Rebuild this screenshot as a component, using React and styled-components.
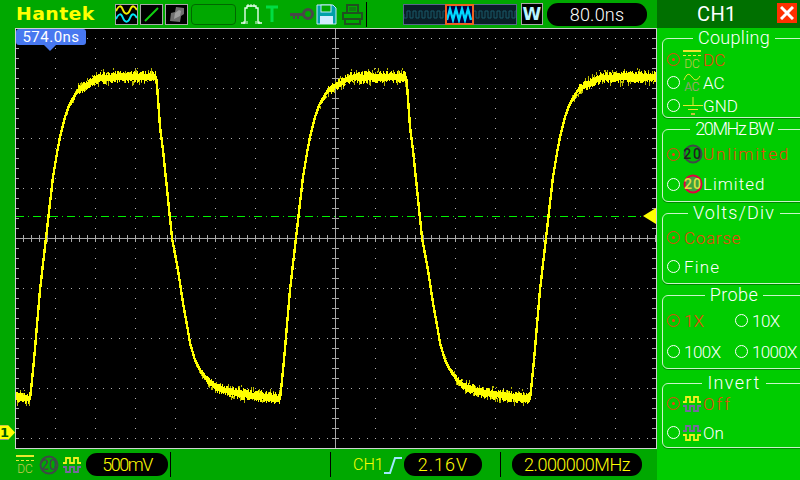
import React from "react";
import styled, { createGlobalStyle } from "styled-components";

const Global = createGlobalStyle`
  html, body { margin: 0; padding: 0; background: #00a800; }
  body { width: 800px; height: 480px; overflow: hidden; font-family: "Roboto", "Liberation Sans", sans-serif; }
  * { box-sizing: border-box; }
`;

const Root = styled.div`
  width: 800px; height: 480px; display: flex; background: #00a800; overflow: hidden;
`;
const LeftColumn = styled.div`
  width: 657px; height: 480px; display: flex; flex-direction: column; position: relative;
`;
const TopBar = styled.div`
  height: 28px; display: flex; align-items: center; padding-left: 16px; flex: none;
`;
const Logo = styled.div`
  width: 99px; font: 700 18.5px/28px "DejaVu Sans", sans-serif; color: #ffff00; letter-spacing: 0.4px; flex: none;
  transform: scaleX(1.02); transform-origin: left;
`;
const IconBox = styled.div`
  width: 23px; height: 21px; background: #000; border: 1px solid #a8a8a8; margin-right: 2px; flex: none; display: flex;
  svg { display: block; }
`;
const EmptySlot = styled.div`
  width: 45px; height: 21px; border: 1px solid #006800; border-radius: 4px; margin-left: 1px; flex: none;
`;
const ToolIcon = styled.svg`
  display: block; flex: none; margin-left: ${p => p.$ml || 0}px;
`;
const Sep = styled.div`
  width: 1px; height: ${p => p.$h || 25}px; background: #000; flex: none; margin-left: ${p => p.$ml || 0}px;
`;
const Strip = styled.div`
  width: 114px; height: 21px; margin-left: 36px; background: #0a1e28; border: 1px solid #58688c; flex: none; position: relative;
`;
const WBox = styled.div`
  width: 22px; height: 22px; margin-left: 4px; background: #000; border: 1px solid #a8a8a8; flex: none;
  color: #b8f4ff; font: 700 17px/20px "DejaVu Sans", sans-serif; text-align: center;
`;
const Pill = styled.div`
  height: ${p => p.$h || 23}px; width: ${p => p.$w}px; margin-left: ${p => p.$ml || 0}px; border-radius: 11px; background: #000;
  color: ${p => p.$color}; font: 300 18px/${p => p.$h || 23}px "Roboto", sans-serif; letter-spacing: ${p => p.$ls ?? 0}px;
  text-align: center; flex: none;
`;
const ScopeWrap = styled.div`
  flex: none; height: 421px; margin-left: 15px; position: relative; border: 1px solid #d0d0d0; background: #000;
  svg { display: block; }
`;
const TimeTag = styled.div`
  position: absolute; left: 0; top: 0; width: 70px; height: 16px; background: #4878f0; border-radius: 3px; color: #fff;
  font: 400 15px/16px "Roboto", sans-serif; letter-spacing: 0.5px; text-align: center;
  &::after {
    content: ""; position: absolute; left: 28px; top: 16px; border: 6px solid transparent; border-top-color: #4878f0; border-bottom: 0;
  }
`;
const TriggerArrow = styled.div`
  position: absolute; right: 0; top: 179px; border: 8px solid transparent; border-right: 13px solid #ffff00; border-left: 0;
`;
const ChannelMark = styled.div`
  position: absolute; left: 0; top: 425px; width: 15px; height: 15px; z-index: 2;
  svg { display: block; }
`;
const ChannelDigit = styled.span`
  position: absolute; left: 0; top: 0; width: 9px; height: 15px; color: #006000; font: 700 13px/15px "DejaVu Sans", sans-serif; text-align: center;
`;
const BottomBar = styled.div`
  flex: 1; display: flex; align-items: center; padding-left: 16px;
`;
const BottomLabel = styled.div`
  margin-left: 22px; width: 26px; color: #ffff00; font: 300 16px/20px "Roboto", sans-serif; flex: none;
`;
const Panel = styled.div`
  width: 143px; height: 480px; background: #00cc00; color: #fff; overflow: hidden; flex: none;
`;
const PanelHead = styled.div`
  height: 28px; background: #007000; display: flex; align-items: center; padding-left: 40px;
`;
const HeadTitle = styled.div`
  font: 400 20px/28px "Roboto", sans-serif; letter-spacing: 0.4px; width: 80px;
`;
const CloseBtn = styled.div`
  width: 20px; height: 20px; background: #ff3000; margin-top: -2px; display: flex; align-items: center; justify-content: center;
`;
const Group = styled.fieldset`
  margin: ${p => p.$mt}px 0 0 5px; padding: 0 0 0 4px; width: 140px; height: ${p => p.$h}px; min-width: 0;
  border: 1px solid #c8f4c8; border-radius: 6px 0 0 6px; box-shadow: 0 1px 0 #008800; display: block;
`;
const Legend = styled.legend`
  margin: 0 auto; padding: 0 5px; height: 20px; font: 300 ${p => p.$fs || 18}px/20px "Roboto", sans-serif; letter-spacing: ${p => p.$ls}px; color: #fff;
`;
const Rows = styled.div`
  display: grid; grid-template-columns: ${p => p.$cols || "1fr"}; margin-top: ${p => p.$mt || 0}px;
`;
const Row = styled.div`
  height: ${p => p.$h}px; display: flex; align-items: center; white-space: nowrap;
  color: ${p => (p.$on ? "#f04010" : "#fff")}; font: 300 17px/20px "Roboto", sans-serif; letter-spacing: ${p => p.$ls ?? 0}px;
`;
const Radio = styled.span`
  width: 13px; height: 13px; border-radius: 50%; border: 1px solid currentColor; flex: none; margin-right: ${p => p.$mr ?? 4}px;
  display: flex; align-items: center; justify-content: center;
  &::after { content: ""; width: 3px; height: 3px; border-radius: 50%; background: ${p => (p.$on ? "currentColor" : "transparent")}; }
`;
const RowIcon = styled.svg`
  flex: none; display: block; margin-right: ${p => p.$mr ?? 2}px;
`;

// ---- icons ----
const DcIcon = ({ size = 18 }) => (
  <RowIcon width={size} height={20} viewBox="0 0 18 20">
    <rect x="0" y="0" width="18" height="2" fill="#e8e830" />
    <path d="M0 5.5h3M5 5.5h3M10 5.5h3M15 5.5h3" stroke="#e8e830" />
    <text x="9" y="18" textAnchor="middle" fontFamily="Roboto" fontSize="12" fontWeight="300" fill="#c8c850">DC</text>
  </RowIcon>
);
const AcIcon = () => (
  <RowIcon width={18} height={20} viewBox="0 0 18 20">
    <path d="M1 7 C4 0 6 0 9 4 S14 8 17 3" fill="none" stroke="#e8e830" />
    <text x="9" y="18" textAnchor="middle" fontFamily="Roboto" fontSize="12" fontWeight="300" fill="#c8c850" stroke="#7070a0" strokeWidth="0.2">AC</text>
  </RowIcon>
);
const GndIcon = () => (
  <RowIcon $mr={0} width={20} height={20} viewBox="0 0 20 20">
    <path d="M10 1v8M0 9.5h20M5 13.5h10" stroke="#e8e830" fill="none" />
    <rect x="8" y="17" width="4" height="2" fill="#c0c040" />
  </RowIcon>
);
const TwentyIcon = ({ red }) => (
  <RowIcon $mr={0} width={20} height={20} viewBox="0 0 20 20">
    <circle cx="10" cy="10" r="8.5" fill={red ? "#40a040" : "#00b800"} stroke={red ? "#e00040" : "#404848"} strokeWidth="2" />
    <text x="10" y="15" textAnchor="middle" fontFamily="Roboto" fontWeight="500" fontSize="14" fill={red ? "#e0e040" : "#202020"}>20</text>
  </RowIcon>
);
const PulsePair = ({ flip }) => {
  const top = flip ? "#7868a0" : "#f0f020";
  const bot = flip ? "#f0f020" : "#7868a0";
  return (
    <RowIcon width={18} height={18} viewBox="0 0 18 18">
      <path d="M0 7h3V2h4v5h4V2h4v5h3" fill="none" stroke={top} strokeWidth="1.8" />
      <path d="M0 11h3v5h4v-5h4v5h4v-5h3" fill="none" stroke={bot} strokeWidth="1.8" />
    </RowIcon>
  );
};

const noise = (() => {
  let s = 1234567;
  return () => {
    s = (s * 1664525 + 1013904223) >>> 0;
    return s / 4294967296;
  };
})();

const PTS = [
  [0, 399], [1, 390], [4, 360], [10, 290], [16, 238], [20, 203], [23, 177], [27, 153], [30, 137], [35, 117], [40, 103],
  [48, 90], [60, 83], [70, 78], [90, 77], [126, 77], [127, 85], [130, 127], [133, 150], [142, 238], [148, 270], [153, 303],
  [157, 325], [160, 343], [165, 360], [170, 370], [177, 380], [185, 387], [200, 392], [220, 395], [250, 399],
];
const baseY = t => {
  for (let i = 1; i < PTS.length; i++) {
    if (t <= PTS[i][0]) {
      const [a, b] = PTS[i - 1];
      const [c, d] = PTS[i];
      return b + ((t - a) / (c - a)) * (d - b);
    }
  }
  return 399;
};
const makeTrace = () => {
  let line = "";
  let jit = "";
  let dim = "";
  for (let x = 16; x <= 655; x++) {
    const t = ((x - 30) % 250 + 250) % 250;
    const y = baseY(t);
    const next = baseY((t + 1) % 250);
    const slope = Math.abs(next - y);
    line += `${x === 16 ? "M" : "L"}${x} ${y.toFixed(1)}`;
    const flat = Math.max(0, 1 - slope / 3);
    if (flat > 0) {
      const a = 1 + flat * 1.5;
      jit += `M${x} ${(y - a - noise() * 4 * flat).toFixed(0)}V${(y + a + noise() * 4 * flat).toFixed(0)}`;
      if (noise() > 0.45) {
        const up = noise() > 0.5;
        dim += `M${x} ${(up ? y - a - 2 - noise() * 5 * flat : y + a + 1).toFixed(0)}v${(1 + noise() * 5 * flat).toFixed(0)}`;
      }
    }
  }
  return { line, jit, dim };
};
const TRACE = makeTrace();

const GRID = (() => {
  let d = "";
  for (let x = 55; x < 656; x += 40) {
    if (x === 335) continue;
    for (let y = 38; y < 448; y += 10) d += `M${x} ${y}h1`;
  }
  for (let y = 38; y < 448; y += 50) {
    if (y === 238) continue;
    for (let x = 23; x < 656; x += 8) d += `M${x} ${y}h1`;
  }
  let t = "M16 238H656M335.5 28V448";
  for (let x = 23; x < 656; x += 8) t += `M${x}.5 235v7`;
  for (let y = 38; y < 448; y += 10) t += `M332 ${y}.5h7`;
  for (let y = 38; y < 448; y += 10) t += `M16 ${y}.5h3M652 ${y}.5h4`;
  return { d, t };
})();

const TriggerLine = styled.line`
  stroke: #00f000; stroke-width: 1.5; stroke-dasharray: 8 4 1 4;
`;

const Scope = () => (
  <ScopeWrap>
    <svg width="640" height="419" viewBox="16 29 640 419" shapeRendering="crispEdges">
      <path d={GRID.d} stroke="#b0b0b0" strokeWidth="1" fill="none" />
      <path d={GRID.t} stroke="#a8a8a8" strokeWidth="1" fill="none" />
      <TriggerLine x1="16" y1="216.5" x2="656" y2="216.5" />
      <path d={TRACE.dim} stroke="#b8b800" strokeWidth="1" fill="none" />
      <path d={TRACE.line} stroke="#ffff00" strokeWidth="2.4" fill="none" />
      <path d={TRACE.jit} stroke="#ffff00" strokeWidth="1" fill="none" />
    </svg>
    <TimeTag>574.0ns</TimeTag>
    <TriggerArrow />
  </ScopeWrap>
);

const WaveIcon = () => (
  <svg width="21" height="19" viewBox="0 0 21 19">
    <path d="M0 6 C3 0 5 0 7 5 S12 10 14 5 S18 0 21 5" fill="none" stroke="#f0f000" strokeWidth="2" />
    <path d="M0 14 C3 8 5 8 7 13 S12 18 14 13 S18 8 21 13" fill="none" stroke="#00e8f8" strokeWidth="2" />
  </svg>
);
const XYIcon = () => (
  <svg width="21" height="19" viewBox="0 0 21 19">
    <path d="M4 16 L17 3" stroke="#10d010" strokeWidth="2" />
  </svg>
);
const PersistIcon = () => (
  <svg width="21" height="19" viewBox="0 0 21 19">
    <path d="M4 16 L5 8 L9 7 L10 2 L18 3 L18 9 L15 11 L14 17 Z" fill="#707070" />
    <path d="M8 14 L9 8 L13 5 L15 6 L14 11 Z" fill="#a0a0a0" />
  </svg>
);

const StripWave = styled.svg`
  position: absolute; left: 0; top: 0; display: block;
`;
const StripFocus = styled.div`
  position: absolute; left: 41px; top: -1px; width: 29px; height: 21px; border: 2px solid #f06020; background: #000040;
  svg { display: block; }
`;
const stripPath = (() => {
  let d = "M0 9";
  for (let x = 0; x < 112; x += 3) d += `V${x % 2 ? 6 : 13}h3`;
  return d;
})();

const Panelled = ({ on, children, h, ls, mr }) => (
  <Row $on={on} $h={h} $ls={ls}>
    <Radio $on={on} $mr={mr} />
    {children}
  </Row>
);

export default function App() {
  return (
    <Root>
      <Global />
      <LeftColumn>
        <TopBar>
          <Logo>Hantek</Logo>
          <IconBox><WaveIcon /></IconBox>
          <IconBox><XYIcon /></IconBox>
          <IconBox><PersistIcon /></IconBox>
          <EmptySlot />
          <ToolIcon $ml={5} width="21" height="22" viewBox="0 0 21 22">
            <path d="M0 20h4V5h2V3h9v2h2v15h4" fill="none" stroke="#e8fff0" strokeWidth="1.4" />
            <path d="M7 1v3M10 1v3M13 1v3M3 18v3M6 18v3M15 18v3M18 18v3" stroke="#e8fff0" />
          </ToolIcon>
          <ToolIcon $ml={4} width="12" height="20" viewBox="0 0 12 20">
            <path d="M0 3h12M6 3v15" stroke="#00dd44" strokeWidth="3" />
          </ToolIcon>
          <ToolIcon $ml={12} width="24" height="14" viewBox="0 0 24 14">
            <circle cx="18" cy="7" r="4.5" fill="none" stroke="#484848" strokeWidth="3" />
            <path d="M0 6h14v3H9v3H7V9H5v3H3V9H0z" fill="#484848" />
          </ToolIcon>
          <ToolIcon $ml={2} width="21" height="21" viewBox="0 0 21 21">
            <path d="M1 1h16l3 3v16H1z" fill="#00a0a8" stroke="#c0e8ff" />
            <rect x="5" y="1" width="10" height="7" fill="#00a800" stroke="#c0e8ff" />
            <rect x="4" y="12" width="13" height="8" fill="#d0ecff" />
          </ToolIcon>
          <ToolIcon $ml={5} width="21" height="21" viewBox="0 0 21 21">
            <path d="M5 1h11v8H5zM1 9h19v6H1zM3 15h15v5H3z" fill="none" stroke="#205020" strokeWidth="2" />
            <path d="M7 4h7M7 6h7" stroke="#205020" />
          </ToolIcon>
          <Sep $ml={3} />
          <Strip>
            <StripWave width="112" height="19" viewBox="0 0 112 19">
              <path d={stripPath} fill="none" stroke="#185868" strokeWidth="1" />
            </StripWave>
            <StripFocus>
              <svg width="25" height="17" viewBox="0 0 25 17">
                <path d="M0 14 L3 3 L6 14 L9 3 L12 14 L15 3 L18 14 L21 3 L24 14" fill="none" stroke="#00d8ff" strokeWidth="2.4" />
              </svg>
            </StripFocus>
          </Strip>
          <WBox>W</WBox>
          <Pill $w={100} $ml={4} $color="#fff" $ls={0.2}>80.0ns</Pill>
        </TopBar>
        <Scope />
        <ChannelMark>
          <svg width="15" height="15" viewBox="0 0 15 15">
            <path d="M0 0h8l7 7.5L8 15H0z" fill="#ffff00" />
            <path d="M0 0h8M0 14.5h8" stroke="#909090" />
          </svg>
          <ChannelDigit>1</ChannelDigit>
        </ChannelMark>
        <BottomBar>
          <DcIcon />
          <ToolIcon $ml={3} width="20" height="20" viewBox="0 0 20 20">
            <circle cx="10" cy="10" r="8.5" fill="#00a800" stroke="#404848" strokeWidth="2" />
            <text x="10" y="15" textAnchor="middle" fontFamily="Roboto" fontWeight="500" fontSize="14" fill="#404848">20</text>
          </ToolIcon>
          <ToolIcon $ml={4} width="18" height="18" viewBox="0 0 18 18">
            <path d="M0 7h3V2h4v5h4V2h4v5h3" fill="none" stroke="#f0f020" strokeWidth="1.8" />
            <path d="M0 11h3v5h4v-5h4v5h4v-5h3" fill="none" stroke="#7868a0" strokeWidth="1.8" />
          </ToolIcon>
          <Pill $w={82} $ml={5} $color="#ffff00" $ls={-1.5}>500mV</Pill>
          <Sep $ml={2} />
          <Sep $ml={159} />
          <BottomLabel>CH1</BottomLabel>
          <ToolIcon $ml={5} width="18" height="20" viewBox="0 0 18 20">
            <path d="M0 18h6L11 3h7" fill="none" stroke="#9fe8ff" strokeWidth="2" />
          </ToolIcon>
          <Pill $w={78} $ml={2} $color="#ffff00" $ls={1}>2.16V</Pill>
          <Sep $ml={18} />
          <Pill $w={130} $ml={11} $color="#ffff00" $ls={-0.5}>2.000000MHz</Pill>
        </BottomBar>
      </LeftColumn>
      <Panel>
        <PanelHead>
          <HeadTitle>CH1</HeadTitle>
          <CloseBtn>
            <svg width="14" height="14" viewBox="0 0 14 14">
              <path d="M1 1L13 13M13 1L1 13" stroke="#fff" strokeWidth="3" />
            </svg>
          </CloseBtn>
        </PanelHead>
        <Group $mt={0} $h={90}>
          <Legend $ls={0.3}>Coupling</Legend>
          <Rows>
            <Panelled on h={23} mr={3}><DcIcon />DC</Panelled>
            <Panelled h={23} mr={3}><AcIcon />AC</Panelled>
            <Panelled h={23} mr={3}><GndIcon />GND</Panelled>
          </Rows>
        </Group>
        <Group $mt={1} $h={83}>
          <Legend $ls={-1.4}>20MHz BW</Legend>
          <Rows>
            <Panelled on h={30} ls={1.8} mr={3}><TwentyIcon />Unlimited</Panelled>
            <Panelled h={30} ls={1} mr={3}><TwentyIcon red />Limited</Panelled>
          </Rows>
        </Group>
        <Group $mt={1} $h={81}>
          <Legend $ls={1.2}>Volts/Div</Legend>
          <Rows>
            <Panelled on h={29} ls={0.7} mr={4}>Coarse</Panelled>
            <Panelled h={29} ls={1.2} mr={4}>Fine</Panelled>
          </Rows>
        </Group>
        <Group $mt={1} $h={84}>
          <Legend $ls={0.4}>Probe</Legend>
          <Rows $cols="68px 70px">
            <Panelled on h={31} mr={4}>1X</Panelled>
            <Panelled h={31} ls={-0.5} mr={4}>10X</Panelled>
            <Panelled h={31} ls={-0.5} mr={4}>100X</Panelled>
            <Panelled h={31} ls={-0.7} mr={4}>1000X</Panelled>
          </Rows>
        </Group>
        <Group $mt={4} $h={75}>
          <Legend $ls={1.4}>Invert</Legend>
          <Rows $mt={-4}>
            <Panelled on h={29} ls={2} mr={3}><PulsePair />Off</Panelled>
            <Panelled h={29} mr={3}><PulsePair flip />On</Panelled>
          </Rows>
        </Group>
      </Panel>
    </Root>
  );
}
